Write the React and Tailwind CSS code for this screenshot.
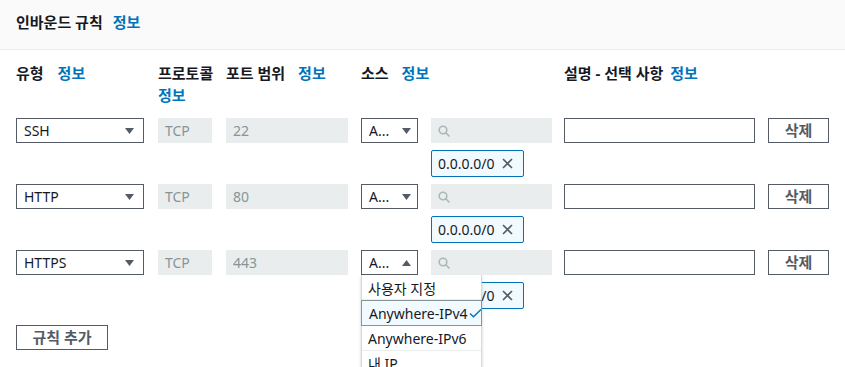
import { useState } from "react";

const cols = "grid grid-cols-[142px_68px_135px_70px_133px_204px_61px]";

const rules = [
  { type: "SSH", port: "22" },
  { type: "HTTP", port: "80" },
  { type: "HTTPS", port: "443", open: true },
];

const Caret = ({ up }) => (
  <svg width="9" height="6" viewBox="0 0 9 6" className="shrink-0">
    {up ? <path d="M0 6 L4.5 0 L9 6 Z" fill="#545b64" /> : <path d="M0 0 L9 0 L4.5 6 Z" fill="#545b64" />}
  </svg>
);

const SearchIcon = () => (
  <svg width="12" height="12" viewBox="0 0 12 12" fill="none" stroke="#aab7b8" strokeWidth="1.6">
    <circle cx="5" cy="5" r="3.8" />
    <path d="M7.8 7.8 L11 11" strokeLinecap="round" />
  </svg>
);

const Info = ({ className = "" }) => (
  <span className={`text-[15px] font-bold text-[#0073bb] ${className}`}>정보</span>
);

const SourceMenu = () => (
  <div className="absolute left-0 top-full z-10 w-[121px] border border-t-0 border-[#d5dbdb] bg-white text-[14px] text-[#16191f] shadow-[0_2px_3px_rgba(0,28,36,0.2)]">
    <div className="flex h-[25px] items-center whitespace-nowrap border-b border-[#eaeded] pl-[6px] pt-[2px]">사용자 지정</div>
    <div className="-mx-px flex h-[26px] items-center whitespace-nowrap border border-[#879596] bg-[#f1faff] pl-[7px]">
      <span>Anywhere-IPv4</span>
      <svg width="13" height="10" viewBox="0 0 13 10" fill="none" stroke="#0073bb" strokeWidth="1.4" className="ml-[1px] shrink-0">
        <path d="M1 5.5 L4.5 8.7 L12 1.5" />
      </svg>
    </div>
    <div className="flex h-[25px] items-center whitespace-nowrap border-b border-[#eaeded] pl-[6px]">Anywhere-IPv6</div>
    <div className="flex h-[25px] items-center whitespace-nowrap pl-[6px]">내 IP</div>
  </div>
);

const RuleRow = ({ rule }) => (
  <div className={`${cols} mb-[7px]`}>
    <div>
      <div className="flex h-[25px] w-[128px] items-center justify-between border border-[#545b64] bg-white pl-[7px] pr-[9px]">
        <span>{rule.type}</span>
        <Caret />
      </div>
    </div>
    <div>
      <div className="flex h-[25px] w-[54px] items-center bg-[#eaeded] pl-[7px] text-[#879596]">TCP</div>
    </div>
    <div>
      <div className="flex h-[25px] w-[122px] items-center bg-[#eaeded] pl-[7px] text-[#879596]">{rule.port}</div>
    </div>
    <div>
      <div className="relative w-[57px]">
        <div className="flex h-[25px] items-center justify-between border border-[#545b64] bg-white pl-[7px] pr-[6px]">
          <span>A...</span>
          <Caret up={rule.open} />
        </div>
        {rule.open && <SourceMenu />}
      </div>
    </div>
    <div>
      <div className="flex h-[25px] w-[121px] items-center bg-[#eaeded] pl-[7px]">
        <SearchIcon />
      </div>
      <div className="mt-[7px] flex h-[27px] w-[93px] items-center gap-[7px] rounded-[2px] border border-[#0073bb] bg-[#f1faff] pl-[6px]">
        <span>0.0.0.0/0</span>
        <svg width="11" height="11" viewBox="0 0 11 11" stroke="#545b64" strokeWidth="1.6">
          <path d="M1 1 L10 10 M10 1 L1 10" />
        </svg>
      </div>
    </div>
    <div>
      <div className="h-[25px] w-[191px] border border-[#545b64] bg-white" />
    </div>
    <div>
      <button className="flex h-[25px] w-[61px] items-center justify-center border border-[#545b64] bg-white text-[15px] font-bold text-[#545b64]">
        삭제
      </button>
    </div>
  </div>
);

export default function App() {
  const [list] = useState(rules);

  return (
    <div className="min-h-screen bg-white font-['Noto_Sans','Noto_Sans_CJK_KR',sans-serif] text-[14px] text-[#16191f]">
      <div className="h-[50px] border-b border-[#eaeded] bg-[#fafafa] px-[16px] pt-[12px] leading-[20px]">
        <span className="text-[15px] font-bold">인바운드 규칙</span>
        <Info className="ml-[10px]" />
      </div>

      <div className="px-[16px]">
        {/* column headers */}
        <div className={`${cols} mb-[12px] pt-[12px] text-[15px] font-bold leading-[22px]`}>
          <div>
            유형<Info className="ml-[14px]" />
          </div>
          <div className="flex flex-col">
            <span>프로토콜</span>
            <Info />
          </div>
          <div>
            포트 범위<Info className="ml-[13px]" />
          </div>
          <div className="col-span-2">
            소스<Info className="ml-[13px]" />
          </div>
          <div className="col-span-2">
            설명 - 선택 사항<Info className="ml-[7px]" />
          </div>
        </div>

        {list.map((r) => (
          <RuleRow key={r.type} rule={r} />
        ))}

        <div className="pt-[9px]">
          <button className="flex h-[25px] w-[92px] items-center justify-center border border-[#545b64] bg-white text-[15px] font-bold text-[#545b64]">
            규칙 추가
          </button>
        </div>
      </div>
    </div>
  );
}
